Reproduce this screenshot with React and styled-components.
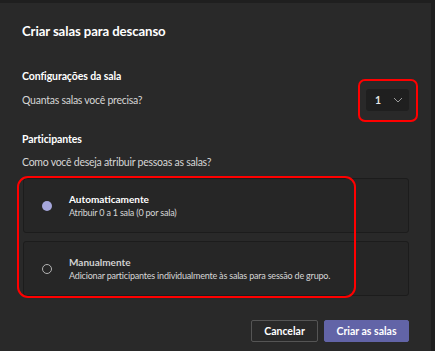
import React, { useState } from 'react';
import styled, { createGlobalStyle } from 'styled-components';

const GlobalStyle = createGlobalStyle`
  html, body {
    margin: 0;
    padding: 0;
    background: #1f1f1f;
    font-family: Lato, 'Noto Sans', sans-serif;
  }
  * { box-sizing: border-box; }
`;

const Dialog = styled.div`
  position: relative;
  margin-top: 3px;
  width: 431px;
  height: 348px;
  background: #292929;
  padding: 19px 22px 0 22px;
  color: #fff;
`;

const Title = styled.h1`
  margin: 0;
  font-size: 13.2px;
  font-weight: 700;
  line-height: 18px;
  letter-spacing: -0.1px;
`;

const Section = styled.section`
  margin-top: ${({ $top }) => $top}px;
`;

const Label = styled.div`
  font-size: 10.5px;
  font-weight: 700;
  line-height: 14px;
  letter-spacing: -0.1px;
`;

const Question = styled.div`
  font-size: 10.5px;
  color: #d6d6d6;
  line-height: 14px;
  letter-spacing: -0.25px;
  margin-top: ${({ $top }) => $top || 0}px;
`;

const Row = styled.div`
  display: flex;
  align-items: center;
  justify-content: space-between;
  margin-top: 6px;
`;

const Select = styled.div`
  width: 43px;
  height: 22px;
  background: #1f1f1f;
  border-radius: 3px;
  display: flex;
  align-items: center;
  justify-content: space-between;
  padding: 0 6px 0 9px;
  font-size: 10.5px;
  font-weight: 700;
  color: #e6e6e6;
`;

const Options = styled.div`
  display: flex;
  flex-direction: column;
  gap: 8px;
  margin-top: 9px;
  margin-left: 1px;
  width: 386px;
`;

const Card = styled.button`
  all: unset;
  box-sizing: border-box;
  display: flex;
  align-items: center;
  height: 55px;
  background: #262626;
  border: 1px solid #1c1c1c;
  border-radius: 3px;
  padding-left: 18px;
  cursor: pointer;
`;

const Radio = styled.span`
  width: 10px;
  height: 10px;
  border-radius: 50%;
  flex: none;
  background: ${({ $checked }) => ($checked ? '#a6a7dc' : 'transparent')};
  border: ${({ $checked }) => ($checked ? 'none' : '1px solid #b3b3b3')};
`;

const CardText = styled.div`
  margin-left: 17px;
`;

const CardTitle = styled.div`
  font-size: 10px;
  font-weight: 700;
  line-height: 13px;
  color: ${({ $muted }) => ($muted ? '#d0d0d0' : '#fff')};
`;

const CardDesc = styled.div`
  font-size: 9px;
  line-height: 13px;
  letter-spacing: -0.2px;
  color: #d6d6d6;
`;

const Footer = styled.div`
  display: flex;
  justify-content: flex-end;
  gap: 6px;
  margin-top: 24px;
`;

const Button = styled.button`
  height: 22px;
  width: ${({ $w }) => $w}px;
  padding: 0;
  white-space: nowrap;
  border-radius: 2px;
  font-family: inherit;
  font-size: 10.5px;
  font-weight: 700;
  color: #fff;
  background: ${({ $primary }) => ($primary ? '#6264a7' : 'transparent')};
  border: 1px solid ${({ $primary }) => ($primary ? '#6264a7' : '#555')};
`;

const Highlight = styled.div`
  position: absolute;
  border: 2.5px solid #f00;
  border-radius: ${({ $r }) => $r}px;
  pointer-events: none;
`;

const Chevron = () => (
  <svg width="10" height="6" viewBox="0 0 10 6" fill="none">
    <path d="M1 1l4 4 4-4" stroke="#9a9a9a" strokeWidth="1" />
  </svg>
);

export default function App() {
  const [mode, setMode] = useState('auto');

  return (
    <>
      <GlobalStyle />
      <Dialog>
        <Title>Criar salas para descanso</Title>

        <Section $top={29}>
          <Label>Configurações da sala</Label>
          <Row>
            <Question>Quantas salas você precisa?</Question>
            <Select>
              <span>1</span>
              <Chevron />
            </Select>
          </Row>
        </Section>

        <Section $top={21}>
          <Label>Participantes</Label>
          <Question $top={9}>Como você deseja atribuir pessoas as salas?</Question>
          <Options>
            <Card onClick={() => setMode('auto')}>
              <Radio $checked={mode === 'auto'} />
              <CardText>
                <CardTitle>Automaticamente</CardTitle>
                <CardDesc>Atribuir 0 a 1 sala (0 por sala)</CardDesc>
              </CardText>
            </Card>
            <Card onClick={() => setMode('manual')}>
              <Radio $checked={mode === 'manual'} />
              <CardText>
                <CardTitle $muted>Manualmente</CardTitle>
                <CardDesc>Adicionar participantes individualmente às salas para sessão de grupo.</CardDesc>
              </CardText>
            </Card>
          </Options>
        </Section>

        <Footer>
          <Button $w={67}>Cancelar</Button>
          <Button $primary $w={85}>Criar as salas</Button>
        </Footer>

        <Highlight $r={7} style={{ left: 358, top: 76, width: 60, height: 43 }} />
        <Highlight $r={11} style={{ left: 17, top: 173, width: 339, height: 122 }} />
      </Dialog>
    </>
  );
}
